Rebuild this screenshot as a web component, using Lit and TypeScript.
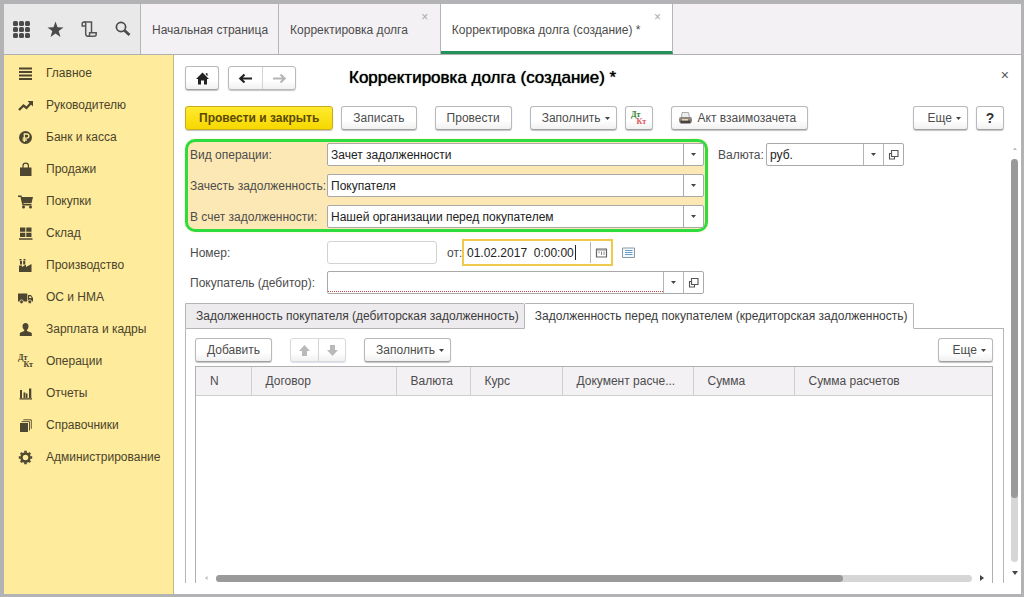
import { LitElement, html, svg, css, nothing } from "lit";
import { customElement, property } from "lit/decorators.js";
import { classMap } from "lit/directives/class-map.js";

const icons: Record<string, unknown> = {
  apps: svg`<g fill="#4a4a4a">${[0, 6, 12].map((y) => [0, 6, 12].map((x) => svg`<rect x=${x} y=${y} width="5" height="5" rx="1.6"/>`))}</g>`,
  star: svg`<path fill="#4a4a4a" d="M8.500.6l2 5.700 6 .1-4.800 3.700 1.800 5.800-5-3.500-5 3.500 1.800-5.800L.5 6.400l6-.1z"/>`,
  scroll: svg`<g fill="none" stroke="#555" stroke-width="1.500"><path d="M4.500 5H1.200V2.800C1.200 1.500 2 1 3 1h7.500v10.500"/><path d="M3 1c1.200 0 1.700.8 1.700 1.800v10c0 1.500.8 2.400 2 2.400h6.500c1.300 0 2-.9 2-2v-1.400H8.600v1.700c0 1-.7 1.700-1.700 1.700"/></g>`,
  search: svg`<g fill="none" stroke="#4a4a4a"><circle cx="6" cy="6" r="4.600" stroke-width="1.700"/><path d="M9.500 9.500l5 4.500" stroke-width="2.800"/></g>`,
  lines: svg`<path stroke="#4d4630" stroke-width="1.800" d="M1 2.500h13M1 6h13M1 9.500h13M1 13h13"/>`,
  trend: svg`<path fill="none" stroke="#4d4630" stroke-width="2.300" d="M1 12l4.500-4.500 3 2.500L13 5"/><path fill="#4d4630" d="M9.500 3H15v5.500z"/>`,
  ruble: svg`<circle cx="7.500" cy="7.500" r="6.500" fill="#4d4630"/><path fill="none" stroke="#ffeb9c" stroke-width="1.300" d="M6.300 12V4h2.500a2 2 0 010 4.200H4.600M4.600 10h4.300"/>`,
  bag: svg`<path fill="#4d4630" d="M2 5.500h11.500V14H2z"/><path fill="none" stroke="#4d4630" stroke-width="1.200" d="M5 7.500V3.800a2.700 2.700 0 015.400 0v3.700"/>`,
  cart: svg`<path fill="none" stroke="#4d4630" stroke-width="1.400" d="M0 2.200h3L5 10.800h8.500"/><path fill="#4d4630" d="M3 3h12l-1.500 6.300h-9z"/><circle cx="5.500" cy="13" r="1.500" fill="#4d4630"/><circle cx="12.500" cy="13" r="1.500" fill="#4d4630"/>`,
  store: svg`<path fill="#4d4630" d="M2 1.500h5.300v4.300H2zM8.300 1.500h5.200v4.300H8.300zM2 6.800h5.300V11H2zM8.300 6.800h5.200V11H8.300zM1 12.200h13.500v1.600H1z"/>`,
  plant: svg`<path fill="#4d4630" d="M1 14V7.500h3V9l4-2.500V9l5.500-3v8zM2 3h2v3.500H2zM5.200 3h2v3.500h-2zM1.500 1h2v1.500h-2zM5.500 1h2v1.500h-2z"/>`,
  truck: svg`<path fill="#4d4630" d="M0 3.500h9.300v8H0zM10 5h3l2 3v3.500h-5z"/><path fill="#ffeb9c" d="M11.200 6.200h1.500l1 1.700h-2.500z"/><g fill="#4d4630" stroke="#ffeb9c" stroke-width=".8"><circle cx="3.500" cy="11.800" r="1.900"/><circle cx="11.800" cy="11.800" r="1.900"/></g>`,
  person: svg`<path fill="#4d4630" d="M7.500 1c2 0 3 1.400 3 3.200 0 1.600-.6 2.800-1.500 3.500v1.200l4 1.700c.6.300.8.800.8 1.500V14H1.800v-1.900c0-.7.200-1.200.8-1.500l3.600-1.700V7.700C5.300 7 4.500 5.800 4.500 4.200 4.500 2.400 5.500 1 7.500 1z"/>`,
  bars: svg`<path fill="#4d4630" d="M2 4h2v8H2zM5.500 6.500h2V12h-2zM8 7.500h1.500V12H8zM11 2.500h2.300V12H11zM1.500 12.300H14v1.200H1.500z"/>`,
  books: svg`<path fill="#4d4630" d="M2 5h8v9H2z"/><path fill="none" stroke="#4d4630" stroke-width=".9" d="M3.500 3.600h8v9M5.300 1.800h8v9"/>`,
  gear: svg`<circle cx="7.500" cy="7.500" r="4" fill="none" stroke="#4d4630" stroke-width="2.400"/><path stroke="#4d4630" stroke-width="2.600" d="M7.500.8v2M7.500 12.200v2M.8 7.500h2M12.200 7.500h2M2.800 2.800l1.300 1.300M10.900 10.900l1.300 1.300M2.800 12.200l1.300-1.300M10.900 4.100l1.300-1.300"/>`,
  home: svg`<path fill="#222" d="M7.500 1.500L14 8h-2v5.500H9V9.500H6v4H3V8H1zM10.800 2.200h1.700v3l-1.700-1.600z"/>`,
  back: svg`<path fill="none" stroke="#222" stroke-width="2.200" d="M2.500 7.500H14M6.500 3.500l-4.200 4 4.200 4"/>`,
  next: svg`<path fill="none" stroke="#b5b5b5" stroke-width="2" d="M1 7.500h11.500M8.500 3.500l4.200 4-4.200 4"/>`,
  up: svg`<path fill="#b9b9b9" d="M7.500 2L13 8h-3v5H5V8H2z"/>`,
  down: svg`<path fill="#b9b9b9" d="M7.500 13L13 7h-3V2H5v5H2z"/>`,
  printer: svg`<path fill="#eee" stroke="#999" stroke-width=".8" d="M4 1.500h6.500l1 5H3.500z"/><rect x="1" y="6" width="13" height="6" rx="2" fill="#8d8780"/><path fill="#4a4440" d="M2.500 9.500h10v3h-10z"/><path fill="#e5d6b5" d="M4 8h6v1.500H4z"/>`,
  open: svg`<g fill="#fff" stroke="#555" stroke-width="1.100"><path d="M5.500 3.500h6.500v6H5.500z"/><path d="M3.500 6.500v5.500h5V9.500h-3v-3z"/></g>`,
  calendar: svg`<path fill="#fff" stroke="#666" stroke-width="1.200" d="M2.500 4h10v8h-10z"/><path stroke="#888" d="M2.500 5h10M5 6.500v1.800M7.500 6.500v3.500M10 6.500v3.500" />`,
  list: svg`<path fill="#f3f8fc" stroke="#8899a6" d="M1.500 3h12v9.500h-12z"/><path stroke="#6d9cc4" d="M4 5.500h7.500M4 7.500h7.500M4 9.500h7.500"/>`,
};

const glyph = (name: string, size = 15) =>
  html`<svg class="glyph" width=${size} height=${size} viewBox="0 0 ${size} ${size}" aria-hidden="true">${icons[name]}</svg>`;

const controls = css`
  * { box-sizing: border-box; }
  .glyph, .caret { display: block; flex: none; }
  button, input, select { font: inherit; color: inherit; margin: 0; }
  button { cursor: pointer; }
  .dtkt { display: grid; font: bold 8px/7px "Liberation Serif", serif; width: 15px; text-align: left; }
  .dtkt span:last-child { text-align: right; }
  .dtkt.colour span:first-child { color: #2b7d2b; }
  .dtkt.colour span:last-child { color: #e05555; }
`;

const dtkt = (colour: boolean) =>
  html`<span class=${classMap({ dtkt: true, colour })}><span>Дт</span><span>Кт</span></span>`;

const caret = html`<svg class="caret" width="5" height="3" viewBox="0 0 5 3" aria-hidden="true"><path fill="#444" d="M0 0h5L2.500 3z" /></svg>`;

@customElement("side-menu")
class SideMenu extends LitElement {
  static styles = [controls, css`
    :host { display: block; background: #ffeb9c; border-right: 1px solid #c4b778; }
    .list { list-style: none; margin: 0; padding: 2px 0 0; }
    .link { display: flex; align-items: center; gap: 13px; height: 32px; padding-left: 14px; color: #4a432b; text-decoration: none; }
  `];
  private items = [
    ["lines", "Главное"], ["trend", "Руководителю"], ["ruble", "Банк и касса"], ["bag", "Продажи"],
    ["cart", "Покупки"], ["store", "Склад"], ["plant", "Производство"], ["truck", "ОС и НМА"],
    ["person", "Зарплата и кадры"], ["dtkt", "Операции"], ["bars", "Отчеты"], ["books", "Справочники"],
    ["gear", "Администрирование"],
  ];
  render() {
    return html`<nav><ul class="list">${this.items.map(([icon, text]) => html`
      <li><a class="link" href="#">${icon === "dtkt" ? dtkt(false) : glyph(icon)}<span>${text}</span></a></li>`)}</ul></nav>`;
  }
}

@customElement("push-button")
class PushButton extends LitElement {
  static styles = [controls, css`
    :host { display: block; }
    .button {
      display: flex; align-items: center; justify-content: center; gap: 5px;
      height: 24px; padding: 0 11px; white-space: nowrap;
      color: #4c4c4c; background: linear-gradient(#fff 60%, #f1f1f1);
      border: 1px solid #b9b9b9; border-bottom-color: #a0a0a0; border-radius: 3px;
      box-shadow: 0 1px 1px #c4c4c4;
    }
    .primary { padding: 0 13px; font-weight: bold; color: #5a4a00; background: linear-gradient(#ffea30, #f6d800); border-color: #c9ab1d; }
    .square { width: 28px; padding: 0; }
    .wide { width: 34px; }
    .help { font-size: 14px; font-weight: bold; color: #333; }
    .menu { min-width: 55px; justify-content: flex-end; padding: 0 6px 0 11px; gap: 4px; }
    .icon { padding-left: 6px; }
  `];
  @property() kind = "";
  @property() icon = "";
  @property({ type: Boolean }) menu = false;
  @property() hint = "";
  render() {
    const cls = { button: true, menu: this.menu, icon: !!this.icon && !this.kind, primary: this.kind === "primary",
      square: ["square", "wide", "help"].includes(this.kind), wide: this.kind === "wide", help: this.kind === "help" };
    return html`<button class=${classMap(cls)} aria-label=${this.hint || nothing}>
      ${this.icon === "dtkt" ? dtkt(true) : this.icon ? glyph(this.icon) : nothing}<slot></slot>${this.menu ? caret : nothing}
    </button>`;
  }
}

@customElement("button-pair")
class ButtonPair extends LitElement {
  static styles = [controls, css`
    :host { display: block; }
    .pair { display: flex; height: 24px; border: 1px solid #b9b9b9; border-radius: 3px; box-shadow: 0 1px 1px #c4c4c4; background: linear-gradient(#fff 60%, #f1f1f1); }
    .pair.faint { border-color: #d6dada; box-shadow: 0 1px 1px #dde; }
    .half { display: grid; place-items: center; width: 33px; padding: 0; border: 0; background: none; }
    .faint .half { width: 27px; }
    .half + .half { border-left: 1px solid #d4d4d4; }
  `];
  @property() first = "";
  @property() second = "";
  @property() firstHint = "";
  @property() secondHint = "";
  @property({ type: Boolean }) faint = false;
  render() {
    return html`<div class=${classMap({ pair: true, faint: this.faint })}>
      <button class="half" aria-label=${this.firstHint}>${glyph(this.first)}</button>
      <button class="half" aria-label=${this.secondHint}>${glyph(this.second)}</button>
    </div>`;
  }
}

@customElement("app-root")
class AppRoot extends LitElement {
  static styles = [controls, css`
    :host {
      display: grid; grid-template: auto minmax(0, 1fr) / 170px minmax(0, 1fr);
      height: 100vh; box-sizing: border-box; overflow: hidden;
      border: solid #b3b3b6; border-width: 4px 3px 3px 4px;
      background: #fff; color: #4c4c4c;
      font: 12px/16px "Liberation Sans", Arial, sans-serif;
    }
    .top { grid-column: 1 / -1; display: flex; height: 51px; background: #f4f1f4; border-bottom: 1px solid #b0b0b0; }
    .tools { display: flex; align-items: center; justify-content: space-between; width: 137px; padding: 0 9px; background: #e9e9e9; border-right: 1px solid #b5b5b5; }
    .tool { display: grid; place-items: center; padding: 0; border: 0; background: none; }
    .tab { display: flex; border-right: 1px solid #b5b5b5; }
    .tab-link { display: flex; align-items: center; padding: 1px 2px 0 11px; color: #4c4c4c; text-decoration: none; }
    .tab-link:only-child { padding-right: 10px; }
    .tab.current { background: #fff; border-bottom: 3px solid #239158; padding-top: 3px; }
    .tab-close { align-self: flex-start; padding: 0; width: 30px; margin-top: 5px; border: 0; background: none; color: #aaa; line-height: 16px; }
    .current .tab-close { margin-top: 2px; }

    .main { display: flex; flex-direction: column; min-width: 0; min-height: 0; padding: 11px 0 11px 11px; }
    .header { display: flex; align-items: center; gap: 9px; height: 24px; padding-right: 12px; }
    .title { margin: 0 0 0 44px; font-size: 17px; line-height: 24px; font-weight: normal; color: #000; text-shadow: 0 0 1px #000; white-space: nowrap; }
    .close { align-self: flex-start; margin-left: auto; padding: 0; border: 0; background: none; color: #555; font-size: 14px; line-height: 18px; }
    .toolbar { display: flex; gap: 18px; margin: 16px 17px 9px 0; }
    .group { display: flex; gap: 8px; }
    .end { margin-left: auto; }

    .body { flex: 1; display: grid; grid-template-columns: minmax(0, 1fr) 17px; min-height: 0; }
    .content { display: flex; flex-direction: column; min-height: 0; }
    .first { display: flex; align-items: flex-start; gap: 10px; }
    .marked { flex: 0 1 523px; display: grid; gap: 8px; padding: 1px 1px 1px 2px; background: #fce8b4; border: 3px solid #2fdc3f; border-radius: 10px; box-shadow: 0 0 2px #ffe9a0; }
    .row { display: grid; grid-template-columns: 137px minmax(0, 1fr); align-items: center; }
    .label { white-space: nowrap; }
    .field { display: grid; grid-template-columns: minmax(0, 1fr) 20px; height: 23px; background: #fff; border: 1px solid #a9a9a9; border-radius: 2px; color: #222; }
    .field.two { grid-template-columns: minmax(0, 1fr) 20px 20px; }
    .select { grid-area: 1 / 1 / 2 / 3; appearance: none; min-width: 0; padding: 0 24px 0 3px; border: 0; background: none; outline: 0; }
    .drop { grid-area: 1 / 2; display: grid; place-items: center; border-left: 1px solid #a9a9a9; pointer-events: none; }
    .input { min-width: 0; width: 100%; height: 21px; padding: 0 3px; border: 0; background: none; outline: 0; }
    .part { display: grid; place-items: center; padding: 0; border: 0; border-left: 1px solid #b5b5b5; background: none; }
    .required { border-bottom: 1px dotted #c04848; height: 20px; }
    .currency { display: grid; grid-template-columns: 48px 138px; align-items: center; margin-top: 4px; }
    .lower { display: grid; gap: 5px; width: 519px; max-width: 100%; margin-top: 7px; padding-left: 5px; }
    .number { display: flex; align-items: center; height: 27px; }
    .number-input { width: 110px; height: 23px; border: 1px solid #d2d2d2; border-radius: 3px; background: #fff; }
    .from { margin-left: 10px; width: 15px; }
    .date { display: flex; align-items: center; width: 151px; height: 27px; border: 2px solid #efc94c; background: #fff; color: #222; }
    .date-input { width: 111px; padding: 0 0 0 3px; border: 0; outline: 0; background: none; white-space: pre; }
    .cursor { width: 1px; height: 15px; background: #222; }
    .date .part { margin-left: auto; width: 21px; height: 21px; }
    .list-button { margin-left: 8px; padding: 0; border: 0; background: none; }

    .sheets { display: flex; margin-top: 9px; }
    .sheet { height: 26px; padding: 0 5px 0 10px; background: #eeebee; border: 1px solid #b5b5b5; color: #3c3c3c; white-space: nowrap; border-radius: 0 2px 0 0; }
    .sheet.on { border-left: 0; border-bottom-color: #fff; background: #fff; }
    .rest { flex: 1; border-bottom: 1px solid #b5b5b5; }
    .panel { flex: 1; display: flex; flex-direction: column; min-height: 0; padding: 9px 10px 0 9px; border: solid #b5b5b5; border-width: 0 1px; }
    .commands { display: flex; gap: 18px; margin-bottom: 4px; }
    .grid { flex: 1; display: flex; flex-direction: column; justify-content: space-between; min-height: 0; border: solid #b0b0b0; border-width: 1px 1px 0; }
    .table { width: 100%; table-layout: fixed; border-collapse: collapse; }
    .cell { height: 28px; padding: 0 0 0 14px; text-align: left; font-weight: normal; background: #f4f1f4; border-bottom: 1px solid #cfcfcf; overflow: hidden; white-space: nowrap; text-overflow: ellipsis; }
    .cell + .cell { border-left: 1px solid #cfcfcf; }
    .hbar { display: grid; grid-template-columns: 20px minmax(0, 1fr) 20px; align-items: center; height: 10px; }
    .track { background: #d6d6d6; border-radius: 4px; }
    .thumb { background: #9a9a9a; border-radius: 4px; }
    .hbar .track, .hbar .thumb { height: 7px; }
    .vbar { display: grid; grid-template-rows: 20px minmax(0, 1fr) 22px; justify-items: center; margin-bottom: -1px; padding-left: 4px; }
    .vbar .track, .vbar .thumb { width: 7px; }
    .arrow { place-self: center; display: block; }
  `];

  private operations = [
    ["kind", "Вид операции:", "Зачет задолженности"],
    ["offset", "Зачесть задолженность:", "Покупателя"],
    ["against", "В счет задолженности:", "Нашей организации перед покупателем"],
  ];
  private columns: [string, number | null][] = [
    ["N", 55], ["Договор", 145], ["Валюта", 74], ["Курс", 92], ["Документ расче...", 131], ["Сумма", 101], ["Сумма расчетов", null],
  ];

  private arrow(path: string, fill: string) {
    return html`<svg class="arrow" width="6" height="6" viewBox="0 0 6 6" aria-hidden="true"><path fill=${fill} d=${path} /></svg>`;
  }

  render() {
    return html`
      <header class="top">
        <div class="tools">
          <button class="tool" aria-label="Разделы">${glyph("apps", 17)}</button>
          <button class="tool" aria-label="Избранное">${glyph("star", 17)}</button>
          <button class="tool" aria-label="История">${glyph("scroll", 17)}</button>
          <button class="tool" aria-label="Поиск">${glyph("search", 16)}</button>
        </div>
        <div class="tab"><a class="tab-link" href="#">Начальная страница</a></div>
        <div class="tab"><a class="tab-link" href="#">Корректировка долга</a><button class="tab-close" aria-label="Закрыть">×</button></div>
        <div class="tab current"><a class="tab-link" href="#">Корректировка долга (создание) *</a><button class="tab-close" aria-label="Закрыть">×</button></div>
      </header>
      <side-menu></side-menu>
      <main class="main">
        <div class="header">
          <push-button kind="wide" icon="home" hint="Домой"></push-button>
          <button-pair first="back" second="next" .firstHint=${"Назад"} .secondHint=${"Вперед"}></button-pair>
          <h1 class="title">Корректировка долга (создание) *</h1>
          <button class="close" aria-label="Закрыть">×</button>
        </div>
        <div class="toolbar">
          <div class="group"><push-button kind="primary">Провести и закрыть</push-button><push-button>Записать</push-button></div>
          <push-button>Провести</push-button>
          <div class="group"><push-button menu>Заполнить</push-button><push-button kind="square" icon="dtkt" hint="Проводки"></push-button></div>
          <push-button icon="printer">Акт взаимозачета</push-button>
          <div class="group end"><push-button menu>Еще</push-button><push-button kind="help">?</push-button></div>
        </div>
        <div class="body">
          <div class="content">
            <div class="first">
              <div class="marked">
                ${this.operations.map(([id, label, value]) => html`
                  <div class="row">
                    <label class="label" for=${id}>${label}</label>
                    <div class="field">
                      <select class="select" id=${id}><option>${value}</option></select>
                      <span class="drop">${caret}</span>
                    </div>
                  </div>`)}
              </div>
              <div class="currency">
                <label class="label" for="currency">Валюта:</label>
                <div class="field two">
                  <input class="input" id="currency" .value=${"руб."} />
                  <button class="part" aria-label="Выбрать">${caret}</button>
                  <button class="part" aria-label="Открыть">${glyph("open")}</button>
                </div>
              </div>
            </div>
            <div class="lower">
              <div class="row">
                <label class="label" for="number">Номер:</label>
                <div class="number">
                  <input class="number-input" id="number" />
                  <label class="from" for="date">от:</label>
                  <div class="date">
                    <input class="date-input" id="date" .value=${"01.02.2017  0:00:00"} /><span class="cursor"></span>
                    <button class="part" aria-label="Календарь">${glyph("calendar")}</button>
                  </div>
                  <button class="list-button" aria-label="Список">${glyph("list")}</button>
                </div>
              </div>
              <div class="row">
                <label class="label" for="debtor">Покупатель (дебитор):</label>
                <div class="field two">
                  <input class="input required" id="debtor" />
                  <button class="part" aria-label="Выбрать">${caret}</button>
                  <button class="part" aria-label="Открыть">${glyph("open")}</button>
                </div>
              </div>
            </div>
            <div class="sheets" role="tablist">
              <button class="sheet" role="tab" aria-selected="false">Задолженность покупателя (дебиторская задолженность)</button>
              <button class="sheet on" role="tab" aria-selected="true">Задолженность перед покупателем (кредиторская задолженность)</button>
              <span class="rest"></span>
            </div>
            <section class="panel">
              <div class="commands">
                <push-button>Добавить</push-button>
                <button-pair faint first="up" second="down" .firstHint=${"Вверх"} .secondHint=${"Вниз"}></button-pair>
                <push-button menu>Заполнить</push-button>
                <push-button class="end" menu>Еще</push-button>
              </div>
              <div class="grid">
                <table class="table">
                  <colgroup>${this.columns.map(([, width]) => html`<col width=${width ?? nothing} />`)}</colgroup>
                  <thead><tr>${this.columns.map(([name]) => html`<th class="cell" scope="col">${name}</th>`)}</tr></thead>
                  <tbody></tbody>
                </table>
                <div class="hbar">
                  ${this.arrow("M4.500 1v4L2 3z", "#bbb")}
                  <div class="track"><div class="thumb" style="width:83%"></div></div>
                  ${this.arrow("M1 0v6l4-3z", "#444")}
                </div>
              </div>
            </section>
          </div>
          <div class="vbar">
            ${this.arrow("M1 4h4L3 1.500z", "#bbb")}
            <div class="track"><div class="thumb" style="height:84%"></div></div>
            ${this.arrow("M0 1h6L3 5z", "#444")}
          </div>
        </div>
      </main>`;
  }
}
